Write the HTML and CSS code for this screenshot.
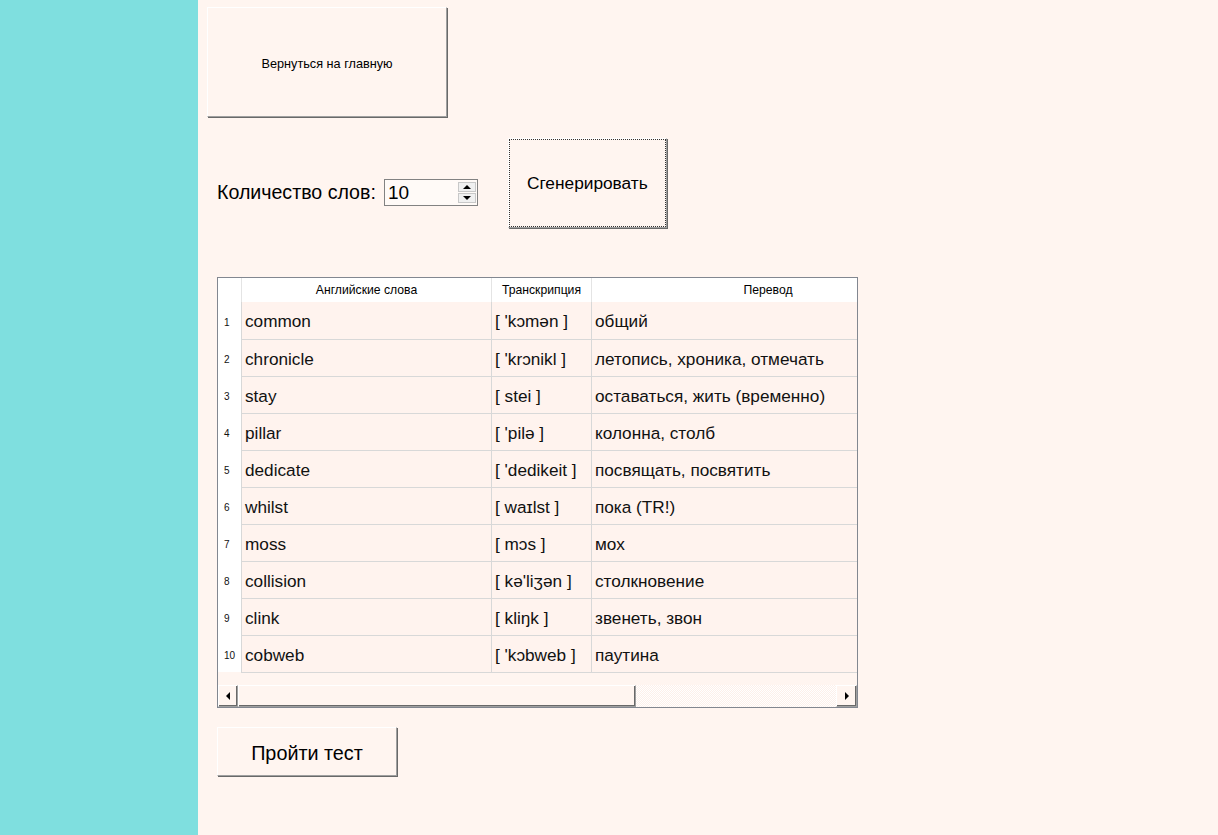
FILE: index.html
```html
<!DOCTYPE html>
<html lang="ru">
<head>
<meta charset="utf-8">
<title>Слова</title>
<link rel="stylesheet" href="styles.css">
</head>
<body>
<div class="app">
  <aside class="sidebar"></aside>
  <main class="main">
    <button class="btn btn-home">Вернуться на главную</button>
    <div class="controls">
      <div class="count">
        <span class="count-label">Количество слов:</span>
        <div class="spin">
          <span class="spin-value">10</span>
          <div class="spin-btns">
            <span class="spin-btn"><i class="arr-up"></i></span>
            <span class="spin-btn"><i class="arr-down"></i></span>
          </div>
        </div>
      </div>
      <button class="btn btn-gen">Сгенерировать</button>
    </div>
    <div class="grid">
      <div class="grid-view">
        <table class="words">
          <thead>
            <tr>
              <th class="rh"></th>
              <th class="c1">Английские слова</th>
              <th class="c2">Транскрипция</th>
              <th class="c3">Перевод</th>
            </tr>
          </thead>
          <tbody>
            <tr><td class="rh">1</td><td>common</td><td>[ 'kɔmən ]</td><td>общий</td></tr>
            <tr><td class="rh">2</td><td>chronicle</td><td>[ 'krɔnikl ]</td><td>летопись, хроника, отмечать</td></tr>
            <tr><td class="rh">3</td><td>stay</td><td>[ stei ]</td><td>оставаться, жить (временно)</td></tr>
            <tr><td class="rh">4</td><td>pillar</td><td>[ 'pilə ]</td><td>колонна, столб</td></tr>
            <tr><td class="rh">5</td><td>dedicate</td><td>[ 'dedikeit ]</td><td>посвящать, посвятить</td></tr>
            <tr><td class="rh">6</td><td>whilst</td><td>[ waɪlst ]</td><td>пока (TR!)</td></tr>
            <tr><td class="rh">7</td><td>moss</td><td>[ mɔs ]</td><td>мох</td></tr>
            <tr><td class="rh">8</td><td>collision</td><td>[ kə'liʒən ]</td><td>столкновение</td></tr>
            <tr><td class="rh">9</td><td>clink</td><td>[ kliŋk ]</td><td>звенеть, звон</td></tr>
            <tr><td class="rh">10</td><td>cobweb</td><td>[ 'kɔbweb ]</td><td>паутина</td></tr>
          </tbody>
        </table>
      </div>
      <div class="hscroll">
        <span class="sb-btn"><i class="arr-left"></i></span>
        <span class="sb-thumb"></span>
        <span class="sb-track"></span>
        <span class="sb-btn sb-right"><i class="arr-right"></i></span>
      </div>
    </div>
    <button class="btn btn-test">Пройти тест</button>
  </main>
</div>
</body>
</html>
```

FILE: styles.css
```css
html, body {
  margin: 0;
  padding: 0;
  height: 100%;
}
body {
  background: #fff5f0;
  font-family: "Liberation Sans", Arial, sans-serif;
  color: #000;
}
.app {
  display: flex;
  min-height: 100%;
}
.sidebar {
  width: 198px;
  flex: none;
  background: #7fdfdf;
}
.main {
  flex: 1;
  padding: 7px 0 0 9px;
  display: flex;
  flex-direction: column;
  align-items: flex-start;
}
.btn {
  font-family: "Liberation Sans", Arial, sans-serif;
  background: #fff5f0;
  color: #000;
  border: none;
  border-top: 1px solid #ffffff;
  border-left: 1px solid #ffffff;
  border-right: 1px solid #a0a0a0;
  border-bottom: 1px solid #a0a0a0;
  box-shadow: 1px 1px 0 #696969;
  padding: 0;
  cursor: default;
}
.btn-home {
  width: 240px;
  height: 110px;
  font-size: 12.7px;
  padding-top: 3px;
}
.controls {
  display: flex;
  align-items: flex-start;
  margin-top: 21px;
  padding-left: 10px;
}
.count {
  display: flex;
  align-items: center;
  margin-top: 41px;
}
.count-label {
  font-size: 19.6px;
  margin-right: 8px;
}
.spin {
  width: 92px;
  height: 25px;
  border: 1px solid #828282;
  background: #fffaf7;
  display: flex;
  align-items: center;
  justify-content: space-between;
}
.spin-value {
  font-size: 19px;
  padding-left: 3px;
}
.spin-btns {
  display: flex;
  flex-direction: column;
  gap: 1px;
  margin-right: 1px;
}
.spin-btn {
  width: 18px;
  height: 10px;
  background: #f0f0f0;
  border: 1px solid #c8c8c8;
  box-sizing: border-box;
  display: flex;
  align-items: center;
  justify-content: center;
}
.arr-up {
  width: 0; height: 0;
  border-left: 4px solid transparent;
  border-right: 4px solid transparent;
  border-bottom: 4px solid #000;
}
.arr-down {
  width: 0; height: 0;
  border-left: 4px solid transparent;
  border-right: 4px solid transparent;
  border-top: 4px solid #000;
}
.btn-gen {
  width: 159px;
  height: 90px;
  margin-left: 30px;
  font-size: 17.3px;
  outline: 1px dotted #333;
  outline-offset: -2px;
}
.grid {
  margin-top: 49px;
  margin-left: 10px;
  width: 639px;
  height: 429px;
  border: 1px solid #828790;
  display: flex;
  flex-direction: column;
  background: #fff5f0;
}
.grid-view {
  flex: 1;
  overflow: hidden;
}
.words {
  border-collapse: collapse;
  table-layout: fixed;
  width: 725px;
}
.words th {
  background: #ffffff;
  font-weight: normal;
  font-size: 12.2px;
  height: 24px;
  padding: 0;
  text-align: center;
  border-right: 1px solid #e4e4e4;
}
.words th.rh,
.words td.rh {
  width: 23px;
  background: #ffffff;
}
.words th.c1 { width: 249px; }
.words th.c2 { width: 99px; }
.words th.c3 { width: 352px; }
.words td {
  height: 37px;
  padding: 3px 0 0 3px;
  box-sizing: border-box;
  font-size: 17.2px;
  background: #fff3ee;
  border-right: 1px solid #d8d8d8;
  border-bottom: 1px solid #d8d8d8;
  white-space: nowrap;
  overflow: hidden;
  color: #111;
}
.words td.rh {
  font-size: 10px;
  padding-left: 6px;
  border-right: none;
  border-bottom: none;
}
.words td.rh + td {
  border-left: 1px solid #d8d8d8;
}
.hscroll {
  height: 22px;
  display: flex;
  flex: none;
}
.sb-btn {
  width: 20px;
  height: 22px;
  box-sizing: border-box;
  background: #fff5f0;
  border-top: 1px solid #ffffff;
  border-left: 1px solid #ffffff;
  border-right: 1px solid #a0a0a0;
  border-bottom: 1px solid #a0a0a0;
  box-shadow: inset -1px -1px 0 #696969;
  display: flex;
  align-items: center;
  justify-content: center;
  flex: none;
}
.sb-right { width: 21px; }
.sb-thumb {
  width: 398px;
  height: 22px;
  box-sizing: border-box;
  background: #fff5f0;
  border-top: 1px solid #ffffff;
  border-left: 1px solid #ffffff;
  border-right: 1px solid #a0a0a0;
  border-bottom: 1px solid #a0a0a0;
  box-shadow: inset -1px -1px 0 #696969;
  flex: none;
}
.sb-track {
  flex: 1;
  background-color: #fffaf7;
  background-image: repeating-conic-gradient(#ffffff 0 25%, #fdf0ea 0 50%);
  background-size: 2px 2px;
}
.arr-left {
  width: 0; height: 0;
  border-top: 4px solid transparent;
  border-bottom: 4px solid transparent;
  border-right: 4px solid #000;
}
.arr-right {
  width: 0; height: 0;
  border-top: 4px solid transparent;
  border-bottom: 4px solid transparent;
  border-left: 4px solid #000;
}
.btn-test {
  margin-top: 19px;
  margin-left: 10px;
  width: 180px;
  height: 49px;
  font-size: 19.8px;
  padding-top: 4px;
}
```
